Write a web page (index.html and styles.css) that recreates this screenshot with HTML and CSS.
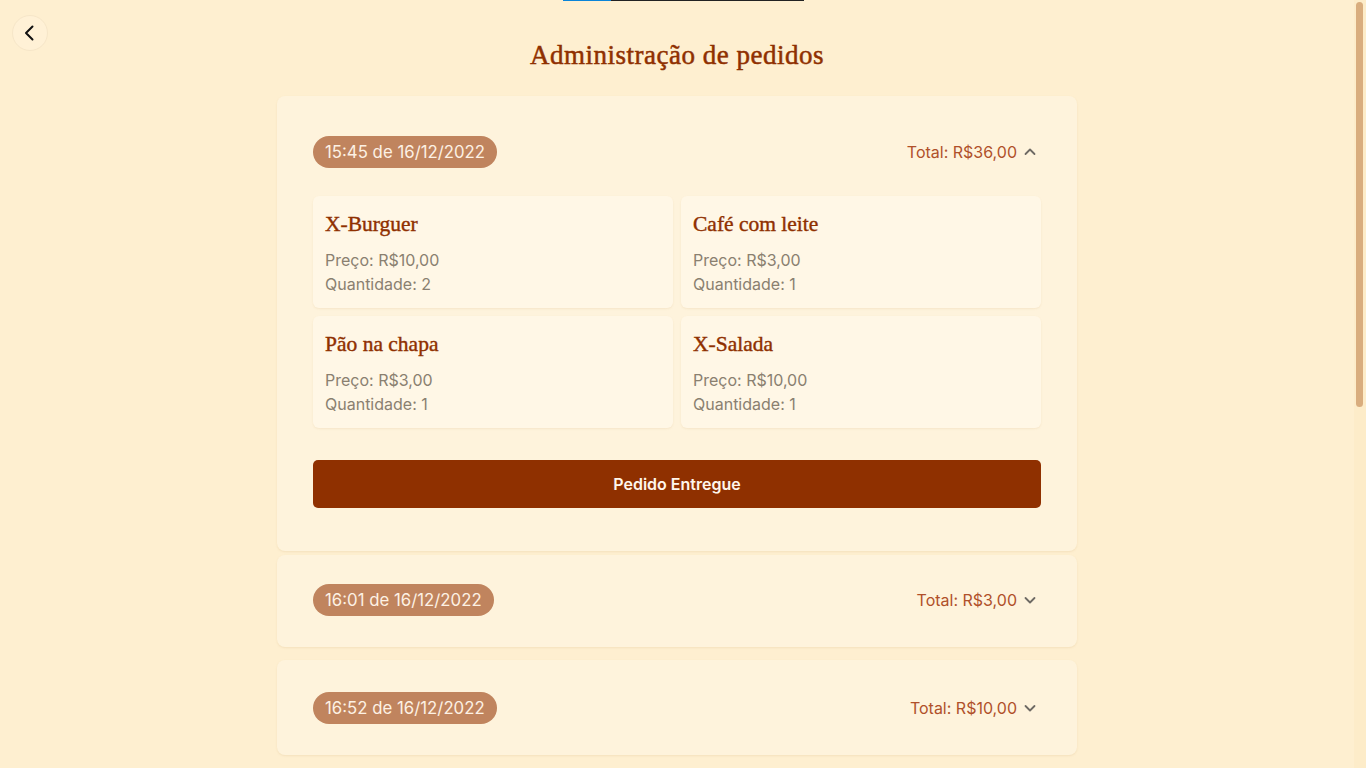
FILE: index.html
```html
<!DOCTYPE html>
<html lang="pt-BR">
<head>
<meta charset="utf-8">
<title>Administração de pedidos</title>
<link rel="stylesheet" href="styles.css">
</head>
<body>
<div class="app">
  <div class="topline"><span class="topline-blue"></span><span class="topline-dark"></span></div>
  <button class="back" aria-label="Voltar">
    <svg width="20" height="20" viewBox="0 0 20 20" fill="none"><path d="M12.5 3.5 6 10l6.5 6.5" stroke="#111" stroke-width="2" stroke-linecap="round" stroke-linejoin="round"/></svg>
  </button>
  <main class="page">
    <h1 class="title">Administração de pedidos</h1>
    <section class="orders">
      <article class="order open">
        <header class="order-head">
          <span class="pill">15:45 de 16/12/2022</span>
          <span class="total">Total: R$36,00
            <svg class="chev" width="14" height="14" viewBox="0 0 14 14"><path d="M2.5 9l4.5-4.5 4.5 4.5" fill="none" stroke="#6e6a64" stroke-width="1.8" stroke-linecap="round" stroke-linejoin="round"/></svg>
          </span>
        </header>
        <div class="items">
          <div class="item"><h2 class="item-name">X-Burguer</h2><p>Preço: R$10,00</p><p>Quantidade: 2</p></div>
          <div class="item"><h2 class="item-name">Café com leite</h2><p>Preço: R$3,00</p><p>Quantidade: 1</p></div>
          <div class="item"><h2 class="item-name">Pão na chapa</h2><p>Preço: R$3,00</p><p>Quantidade: 1</p></div>
          <div class="item"><h2 class="item-name">X-Salada</h2><p>Preço: R$10,00</p><p>Quantidade: 1</p></div>
        </div>
        <button class="deliver">Pedido Entregue</button>
      </article>
      <article class="order second">
        <header class="order-head">
          <span class="pill">16:01 de 16/12/2022</span>
          <span class="total">Total: R$3,00
            <svg class="chev" width="14" height="14" viewBox="0 0 14 14"><path d="M2.5 5l4.5 4.5 4.5-4.5" fill="none" stroke="#6e6a64" stroke-width="1.8" stroke-linecap="round" stroke-linejoin="round"/></svg>
          </span>
        </header>
      </article>
      <article class="order">
        <header class="order-head">
          <span class="pill">16:52 de 16/12/2022</span>
          <span class="total">Total: R$10,00
            <svg class="chev" width="14" height="14" viewBox="0 0 14 14"><path d="M2.5 5l4.5 4.5 4.5-4.5" fill="none" stroke="#6e6a64" stroke-width="1.8" stroke-linecap="round" stroke-linejoin="round"/></svg>
          </span>
        </header>
      </article>
    </section>
  </main>
</div>
<div class="scrollbar"><div class="scrollbar-thumb"></div></div>
</body>
</html>
```

FILE: styles.css
```css
html,
body {
  margin: 0;
  height: 100%;
  overflow: hidden;
  background: #feefd0;
}
body {
  display: flex;
  font-family: "Inter", "Liberation Sans", sans-serif;
  color: #8a8070;
}
.app {
  position: relative;
  flex: 1;
  height: 100vh;
  overflow: hidden;
  background: #feefd0;
}
.scrollbar {
  width: 12px;
  flex: none;
  background: #fdecc9;
  padding: 2px 3px 0 2px;
  box-sizing: border-box;
}
.scrollbar-thumb {
  height: 405px;
  border-radius: 4px;
  background: #d9ad7e;
}
.topline {
  display: flex;
  height: 1px;
  width: 241px;
  margin-left: calc(50% - 114px);
}
.topline-blue {
  width: 48px;
  background: #0a84d8;
}
.topline-dark {
  flex: 1;
  background: #222;
}
.back {
  position: absolute;
  left: 12px;
  top: 15px;
  width: 36px;
  height: 36px;
  border-radius: 50%;
  border: 1px solid #f6e6c8;
  background: #fff1d6;
  display: flex;
  align-items: center;
  justify-content: center;
  padding: 0;
  cursor: pointer;
}
.page {
  width: 800px;
  margin: 0 auto;
}
.title {
  margin: 0;
  padding-top: 39px;
  height: 95px;
  box-sizing: border-box;
  text-align: center;
  font-family: "Liberation Serif", serif;
  font-weight: 400;
  -webkit-text-stroke: 0.5px #8f3000;
  font-size: 27px;
  line-height: 30px;
  letter-spacing: 0.5px;
  color: #8f3000;
}
.orders {
  display: flex;
  flex-direction: column;
  gap: 12px;
}
.order {
  background: #fef3dc;
  border-radius: 8px;
  box-shadow: 0 1px 2px rgba(200, 160, 100, 0.18);
  padding: 32px 36px 31px;
}
.order.open {
  padding: 40px 36px 43px;
}
.order.second {
  margin-top: -8px;
  margin-bottom: 1px;
  padding-top: 29px;
}
.order-head {
  display: flex;
  justify-content: space-between;
  align-items: center;
  height: 32px;
}
.pill {
  background: #c0845e;
  color: #fdf1e4;
  border-radius: 16px;
  padding: 0 12px;
  height: 32px;
  line-height: 32px;
  font-size: 16.8px;
}
.total {
  display: flex;
  align-items: center;
  gap: 6px;
  margin-right: 4px;
  color: #b0502a;
  font-size: 16px;
}
.chev {
  display: block;
}
.items {
  margin-top: 28px;
  display: grid;
  grid-template-columns: 1fr 1fr;
  gap: 8px;
}
.item {
  background: #fff7e6;
  border-radius: 6px;
  box-shadow: 0 1px 2px rgba(200, 160, 100, 0.15);
  padding: 14px 12px 12px;
  height: 112px;
  box-sizing: border-box;
}
.item-name {
  margin: 0 0 10px;
  font-family: "Liberation Serif", serif;
  font-weight: 400;
  -webkit-text-stroke: 0.4px #8f3000;
  font-size: 21.5px;
  line-height: 28px;
  color: #8f3000;
}
.item p {
  margin: 0;
  font-size: 16px;
  line-height: 24px;
  color: #8a8070;
}
.deliver {
  margin-top: 32px;
  width: 100%;
  height: 48px;
  border: none;
  border-radius: 5px;
  background: #8f3000;
  color: #fff6ec;
  font-family: "Inter", "Liberation Sans", sans-serif;
  font-weight: 600;
  font-size: 16px;
  cursor: pointer;
}
```
